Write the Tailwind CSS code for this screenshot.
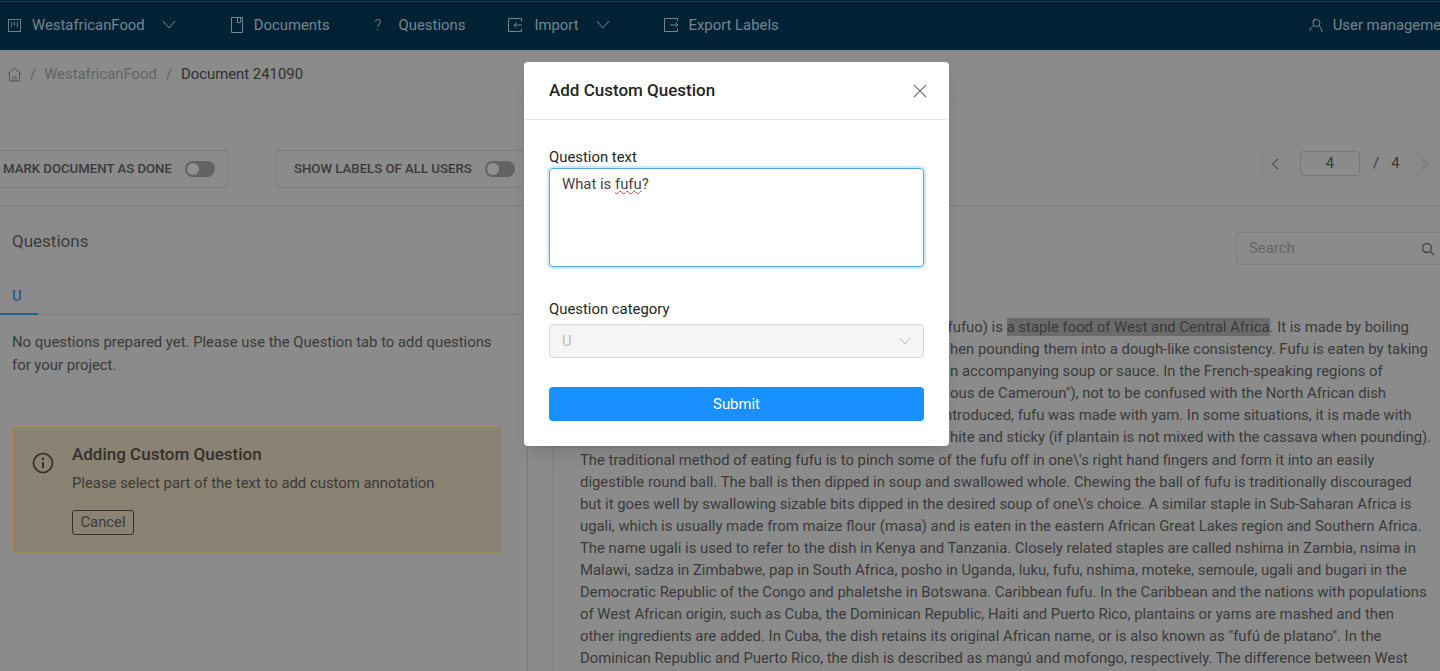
<!DOCTYPE html>
<html lang="en">
<head>
<meta charset="UTF-8">
<script src="https://cdn.jsdelivr.net/npm/@tailwindcss/browser@4"></script>
<title>Document 241090</title>
</head>
<body class="h-[671px] overflow-hidden bg-[#8b8b8b] font-['Roboto',sans-serif] text-[14.875px] text-[#3a3a3a]">

<!-- top nav -->
<div class="h-px bg-[#012235]"></div>
<nav class="flex h-[49px] items-center overflow-hidden whitespace-nowrap border-t border-[#16405a] bg-[#012235] pb-[2px] text-[#76868f]">
	<svg class="ml-[8px] h-[13px] w-[13px] shrink-0" viewBox="0 0 14 14" fill="none" stroke="currentColor"><rect x="0.5" y="0.5" width="13" height="13"/><path d="M4 3v6M7 3v4M10 3v6"/></svg>
	<span class="ml-[11px] shrink-0">WestafricanFood</span>
	<svg class="ml-[17px] h-[10px] w-[14px] shrink-0" viewBox="0 0 14 10" fill="none" stroke="currentColor"><path d="M1 1l6 7 6-7"/></svg>
	<svg class="ml-[55px] h-[16px] w-[12px] shrink-0" viewBox="0 0 12 16" fill="none" stroke="currentColor"><path d="M.5.5h11v15H.5zM6.500.5v5h3v-5"/></svg>
	<span class="ml-[11px] shrink-0">Documents</span>
	<span class="ml-[45px] w-[12px] shrink-0 font-light">?</span>
	<span class="ml-[12px] shrink-0">Questions</span>
	<svg class="ml-[43px] h-[14px] w-[15px] shrink-0" viewBox="0 0 15 14" fill="none" stroke="currentColor"><path d="M13.500 3.500v-3H.5v13h13v-3M14 7H6M8.500 4.500L6 7l2.500 2.500"/></svg>
	<span class="ml-[11px] shrink-0">Import</span>
	<svg class="ml-[17px] h-[10px] w-[14px] shrink-0" viewBox="0 0 14 10" fill="none" stroke="currentColor"><path d="M1 1l6 7 6-7"/></svg>
	<svg class="ml-[54px] h-[14px] w-[15px] shrink-0" viewBox="0 0 15 14" fill="none" stroke="currentColor"><path d="M13.500 3.500v-3H.5v13h13v-3M6 7h8M11.500 4.500L14 7l-2.500 2.500"/></svg>
	<span class="ml-[10px] shrink-0">Export Labels</span>
	<svg class="ml-[530px] h-[15px] w-[14px] shrink-0" viewBox="0 0 14 15" fill="none" stroke="currentColor"><circle cx="7.500" cy="5" r="3.500"/><path d="M1 13c.5-3 1.500-4.500 4-5.500M13 14c-.5-3-1.500-5-3.500-6.500M4 4L6 .5"/></svg>
	<span class="ml-[10px] shrink-0">User management</span>
</nav>

<!-- breadcrumb -->
<div class="flex h-[49px] items-center border-b border-[#848484] pl-[7px]">
	<svg class="h-[15px] w-[15px] text-[#555]" viewBox="0 0 15 15" fill="none" stroke="currentColor"><path d="M.5 7.500L7.500 1l7 6.500M2.500 6v8h10V6M6 14v-4h3v4"/></svg>
	<span class="ml-[8px] text-[#636363]">/</span>
	<span class="ml-[8px] text-[#636363]">WestafricanFood</span>
	<span class="ml-[9px] text-[#636363]">/</span>
	<span class="ml-[9px] text-[#2f2f2f]">Document 241090</span>
</div>

<!-- toolbar -->
<div class="flex h-[107px] items-start border-b border-[#7a7a7a] pt-[51px]">
	<div class="ml-[-8px] flex h-[38px] w-[236px] shrink-0 items-center rounded border border-[#7d7d7d] pl-[10px] text-[13.200px] font-medium">
		<span>MARK DOCUMENT AS DONE</span>
		<span class="ml-[13px] flex h-[16px] w-[30px] items-center rounded-full bg-[#636363] pl-[2px]"><span class="h-[12px] w-[12px] rounded-full bg-[#909090]"></span></span>
	</div>
	<div class="ml-[48px] flex h-[38px] w-[260px] shrink-0 items-center rounded border border-[#7d7d7d] pl-[17px] text-[13.200px] font-medium">
		<span>SHOW LABELS OF ALL USERS</span>
		<span class="ml-[13px] flex h-[16px] w-[30px] items-center rounded-full bg-[#636363] pl-[2px]"><span class="h-[12px] w-[12px] rounded-full bg-[#909090]"></span></span>
	</div>
	<div class="ml-[724px] flex h-[26px] shrink-0 items-center pt-[1px]">
		<span class="flex h-[26px] w-[30px] items-center justify-center rounded bg-[#898989]"><svg class="h-[12px] w-[8px]" viewBox="0 0 8 12" fill="none" stroke="#333"><path d="M7 1L1.500 6 7 11"/></svg></span>
		<span class="ml-[10px] flex h-[25px] w-[60px] items-center justify-center rounded-sm border border-[#777]">4</span>
		<span class="ml-[13px]">/</span>
		<span class="ml-[12px]">4</span>
		<span class="ml-[10px] flex h-[26px] w-[30px] items-center justify-center rounded bg-[#898989]"><svg class="h-[12px] w-[8px]" viewBox="0 0 8 12" fill="none" stroke="#6e6e6e"><path d="M1 1l5.500 5L1 11"/></svg></span>
	</div>
</div>

<!-- two columns -->
<div class="flex h-[466px] overflow-hidden">
	<aside class="w-[528px] shrink-0 border-r border-[#7a7a7a]">
		<h2 class="ml-[12px] mt-[23px] text-[17px] leading-[24px]">Questions</h2>
		<div class="mt-[32px] h-[30px] border-b border-[#808080]">
			<div class="h-[30px] w-[38px] border-b-2 border-[#235c8e] pl-[12px] leading-[22px] font-medium text-[#235c8e]">U</div>
		</div>
		<p class="ml-[12px] mt-[16px] w-[490px] leading-[22.500px]">No questions prepared yet. Please use the Question tab to add questions for your project.</p>
		<div class="ml-[12px] mt-[50px] flex h-[127px] w-[490px] rounded-sm border border-[#a08a5e] bg-[#8b8274] pl-[19px] pt-[16px]">
			<svg class="mt-[9px] h-[22px] w-[22px] shrink-0 text-[#33302a]" viewBox="0 0 22 22" fill="none" stroke="currentColor" stroke-width="1.700"><circle cx="11" cy="11" r="9.500"/><path d="M11 10v6" stroke-width="2"/><circle cx="11" cy="6.800" r="1.200" fill="currentColor" stroke="none"/></svg>
			<div class="ml-[18px]">
				<h3 class="text-[17px] leading-[22px] font-medium text-[#33302a]">Adding Custom Question</h3>
				<p class="mt-[7px] leading-[22px]">Please select part of the text to add custom annotation</p>
				<button class="mt-[16px] h-[25px] w-[62px] rounded-[3px] border border-[#33302a]">Cancel</button>
			</div>
		</div>
	</aside>
	<div class="w-[26px] shrink-0 border-r border-[#7a7a7a]"></div>
	<main class="relative min-w-0 flex-1 whitespace-nowrap pl-[26px] leading-[22.100px]">
		<div class="ml-[656px] mt-[26px] flex h-[33px] w-[240px] items-center rounded-sm border border-[#7d7d7d] pl-[12px] text-[#666]">
			Search
			<svg class="ml-[126px] h-[14px] w-[14px] shrink-0" viewBox="0 0 14 14" fill="none" stroke="#444" stroke-width="1.300"><circle cx="6" cy="6" r="4.500"/><path d="M9.500 9.500L13 13"/></svg>
		</div>
		<div class="mt-[51px]">
			<div class="pl-[312px]">Fufu (or fufuo) is <span class="bg-[#6b6b6b]">a staple food of West and Central Africa</span>. It is made by boiling</div>
			<div class="pl-[370px]">hen pounding them into a dough-like consistency. Fufu is eaten by taking</div>
			<div class="pl-[370px]">n accompanying soup or sauce. In the French-speaking regions of</div>
			<div class="pl-[370px]">ous de Cameroun"), not to be confused with the North African dish</div>
			<div class="pl-[364px]">ntroduced, fufu was made with yam. In some situations, it is made with</div>
			<div class="pl-[370px]">hite and sticky (if plantain is not mixed with the cassava when pounding).</div>
			<div>The traditional method of eating fufu is to pinch some of the fufu off in one\'s right hand fingers and form it into an easily</div>
			<div>digestible round ball. The ball is then dipped in soup and swallowed whole. Chewing the ball of fufu is traditionally discouraged</div>
			<div>but it goes well by swallowing sizable bits dipped in the desired soup of one\'s choice. A similar staple in Sub-Saharan Africa is</div>
			<div>ugali, which is usually made from maize flour (masa) and is eaten in the eastern African Great Lakes region and Southern Africa.</div>
			<div>The name ugali is used to refer to the dish in Kenya and Tanzania. Closely related staples are called nshima in Zambia, nsima in</div>
			<div>Malawi, sadza in Zimbabwe, pap in South Africa, posho in Uganda, luku, fufu, nshima, moteke, semoule, ugali and bugari in the</div>
			<div>Democratic Republic of the Congo and phaletshe in Botswana. Caribbean fufu. In the Caribbean and the nations with populations</div>
			<div>of West African origin, such as Cuba, the Dominican Republic, Haiti and Puerto Rico, plantains or yams are mashed and then</div>
			<div>other ingredients are added. In Cuba, the dish retains its original African name, or is also known as "fufú de platano". In the</div>
			<div>Dominican Republic and Puerto Rico, the dish is described as mangú and mofongo, respectively. The difference between West</div>
		</div>
	</main>
</div>

<!-- modal, lies over the dimmed page -->
<div class="absolute left-[524px] top-[62px] w-[425px] rounded-sm bg-white text-[#262626] shadow-lg">
	<div class="flex h-[58px] items-center justify-between border-b border-[#e8e8e8] pl-[25px] pr-[22px]">
		<h2 class="text-[17px] font-medium">Add Custom Question</h2>
		<svg class="h-[14px] w-[14px]" viewBox="0 0 14 14" fill="none" stroke="#777" stroke-width="1.200"><path d="M1 1l12 12M13 1L1 13"/></svg>
	</div>
	<div class="px-[25px] pb-[25px] pt-[26px]">
		<label class="block leading-[22px]">Question text</label>
		<div class="h-[99px] rounded-sm border border-[#55a8f0] px-[12px] py-[4px] leading-[22px] text-[#444] shadow-[0_0_0_2px_rgba(24,144,255,0.2)]">What is <span class="underline decoration-wavy decoration-[#e33] decoration-1">fufu</span>?</div>
		<label class="mt-[31px] block leading-[22px]">Question category</label>
		<div class="mt-[4px] flex h-[34px] items-center justify-between rounded-sm border border-[#d9d9d9] bg-[#f5f5f5] pl-[12px] pr-[12px] text-[#bfbfbf]">
			U
			<svg class="h-[8px] w-[12px]" viewBox="0 0 12 8" fill="none" stroke="#bfbfbf"><path d="M1 1l5 6 5-6"/></svg>
		</div>
		<button class="mt-[29px] h-[34px] w-full rounded-sm bg-[#1890ff] text-white">Submit</button>
	</div>
</div>
</body>
</html>
